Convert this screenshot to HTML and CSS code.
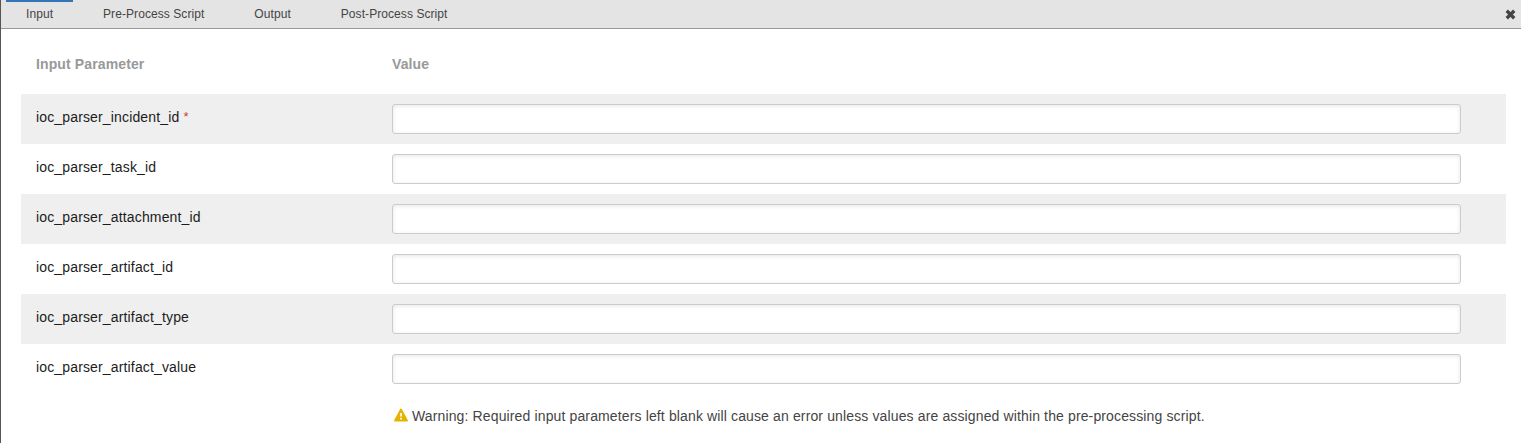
FILE: index.html
```html
<!DOCTYPE html>
<html lang="en">
<head>
<meta charset="utf-8">
<title>Function Input</title>
<link rel="stylesheet" href="styles.css">
</head>
<body>
<div class="panel">
  <nav class="tabs">
    <a class="tab active">Input</a>
    <a class="tab">Pre-Process Script</a>
    <a class="tab">Output</a>
    <a class="tab">Post-Process Script</a>
    <svg class="close" viewBox="0 0 10 10"><path d="M1.6 1.6L8.400 8.400M8.400 1.600L1.600 8.400"/></svg>
  </nav>
  <main class="content">
    <div class="row head"><div class="name">Input Parameter</div><div>Value</div></div>
    <div class="row odd"><label class="name">ioc_parser_incident_id <span class="req">*</span></label><input class="field"></div>
    <div class="row"><label class="name">ioc_parser_task_id</label><input class="field"></div>
    <div class="row odd"><label class="name">ioc_parser_attachment_id</label><input class="field"></div>
    <div class="row"><label class="name">ioc_parser_artifact_id</label><input class="field"></div>
    <div class="row odd"><label class="name">ioc_parser_artifact_type</label><input class="field"></div>
    <div class="row"><label class="name">ioc_parser_artifact_value</label><input class="field"></div>
    <div class="warning"><svg class="warn-icon" viewBox="0 0 14 14"><path class="tri" d="M7 1.200L13.200 12.700H.8Z"/><path class="mark" d="M7 5V8.600M7 9.800V11.500"/></svg><span>Warning: Required input parameters left blank will cause an error unless values are assigned within the pre-processing script.</span></div>
  </main>
</div>
</body>
</html>
```
FILE: styles.css
```css
* { box-sizing: border-box; }
body { margin: 0; background: #fff; font: 14px/20px "Liberation Sans", Arial, sans-serif; color: #1c1c1c; }
.panel { height: 443px; border-left: 1px solid #555; overflow: hidden; }
.tabs { display: flex; height: 29px; padding-left: 5px; background: #e4e4e4; border-bottom: 1px solid #999; font-size: 12px; letter-spacing: .07px; color: #444; }
.tab { padding: 0 20px; border-top: 2px solid transparent; line-height: 24px; margin-right: 10px; }
.tab.active { border-top-color: #3375b5; }
.close { width: 11px; height: 11px; margin: 9px 5px 0 auto; stroke: #444; stroke-width: 3; }
.content { padding: 15px 15px 0 20px; }
.row { display: grid; grid-template-columns: 356px 1069px; height: 50px; padding: 10px 15px; letter-spacing: .15px; }
.row.head { color: #999; font-weight: 700; letter-spacing: .12px; }
.odd { background: #efefef; }
.name { padding-top: 3px; }
.head .name { padding-top: 0; }
.req { color: #c9403e; font-size: 13px; line-height: 1; vertical-align: 1px; }
.field { height: 30px; border: 1px solid #ccc; border-radius: 3px; background: #fff; box-shadow: inset 0 1px 4px rgba(0,0,0,.1); }
.warning { display: flex; margin: 12px 0 0 373px; color: #444; letter-spacing: .132px; }
.warn-icon { width: 14px; height: 14px; margin: 2px 4px 0 0; }
.tri { fill: #e5b400; stroke: #e5b400; stroke-width: 1.5; stroke-linejoin: round; }
.mark { stroke: #fff; stroke-width: 1.700; }
```
